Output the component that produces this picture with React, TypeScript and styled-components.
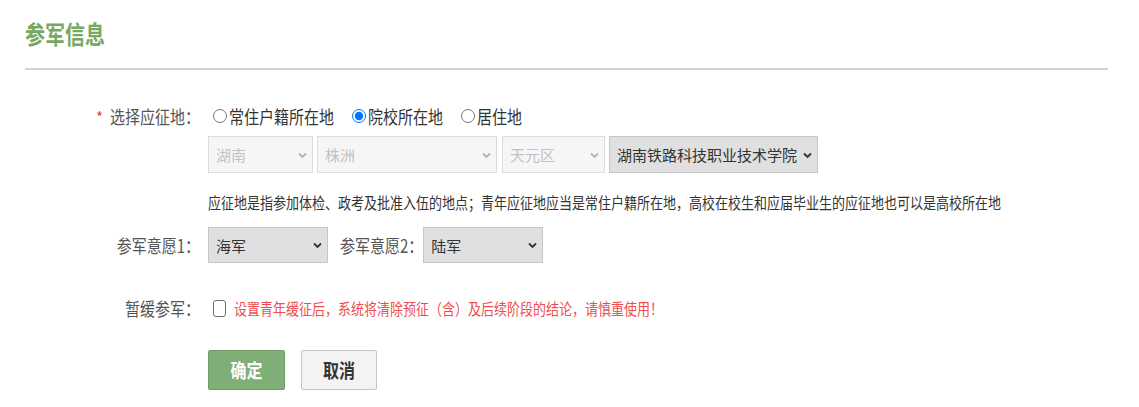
import React from "react";
import styled, { createGlobalStyle } from "styled-components";

const Global = createGlobalStyle`
  html, body { margin: 0; padding: 0; background: #fff; }
  body { font-family: "Noto Sans CJK SC", "Noto Sans", sans-serif; color: #333; }
  * { box-sizing: border-box; }
`;

const Page = styled.div`
  width: 1139px;
  height: 407px;
  overflow: hidden;
`;

const Header = styled.div`
  height: 68px;
  padding-left: 25px;
  display: flex;
  align-items: center;
`;

const Title = styled.h2`
  margin: 0;
  font-size: 20px;
  font-weight: 700;
  color: #76a862;
  line-height: 24px;
  transform: scaleY(1.25);
`;

const Divider = styled.div`
  margin: 0 31px 0 25px;
  border-top: 2px solid #d2d2d2;
`;

const Form = styled.div`
  display: flex;
  flex-direction: column;
`;

const Row = styled.div<{ $top: number; $h: number }>`
  display: flex;
  align-items: center;
  margin-top: ${(p) => p.$top}px;
  height: ${(p) => p.$h}px;
`;

const LabelCol = styled.div`
  width: 204px;
  flex: none;
  text-align: right;
  margin-right: 4px;
`;

const Label = styled.span<{ $mr?: number }>`
  font-size: 15px;
  color: #555;
  white-space: nowrap;
  display: inline-block;
  transform: scaleY(1.2);
  margin-right: ${(p) => p.$mr ?? 4}px;
`;

const Star = styled.span`
  color: #e8403a;
  margin-right: 7px;
  font-size: 15px;
`;

const Content = styled.div`
  display: flex;
  align-items: center;
`;

const RadioItem = styled.label`
  display: inline-flex;
  align-items: center;
  margin-right: 13px;
  font-size: 15px;
  color: #333;
  cursor: pointer;
`;

const Radio = styled.input`
  width: 14px;
  height: 14px;
  margin: 0 2px 0 5px;
`;

const Txt = styled.span`
  display: inline-block;
  transform: scaleY(1.2);
  white-space: nowrap;
`;

const SelectWrap = styled.div<{ $w: number; $mr?: number }>`
  position: relative;
  width: ${(p) => p.$w}px;
  margin-right: ${(p) => p.$mr ?? 0}px;
  flex: none;
`;

const Select = styled.select<{ $h: number }>`
  appearance: none;
  -webkit-appearance: none;
  width: 100%;
  height: ${(p) => p.$h}px;
  padding: 0 20px 0 7px;
  font-family: inherit;
  font-size: 15px;
  color: #333;
  background: #e0e0e0;
  border: 1px solid #c6c6c6;
  border-radius: 0;
  outline: none;
  &:disabled {
    background: #f6f6f6;
    border-color: #dcdcdc;
    color: #c2c2c2;
    opacity: 1;
  }
`;

const Chevron = styled.svg<{ $disabled?: boolean }>`
  position: absolute;
  right: 6px;
  top: 50%;
  width: 9px;
  height: 7px;
  margin-top: -3px;
  pointer-events: none;
  color: ${(p) => (p.$disabled ? "#b5b5b5" : "#333")};
`;

const Hint = styled.div`
  font-size: 13px;
  color: #333;
  white-space: nowrap;
  transform: scaleY(1.2);
  transform-origin: left center;
`;

const Checkbox = styled.input`
  appearance: none;
  -webkit-appearance: none;
  width: 13px;
  height: 17px;
  margin: 0 8px 0 5px;
  border: 1px solid #6f6f6f;
  border-radius: 3px;
  background: #fff;
  &:checked {
    background: #0075ff;
    border-color: #0075ff;
  }
`;

const Warn = styled.span`
  font-size: 13px;
  color: #ee4d4d;
  white-space: nowrap;
  display: inline-block;
  transform: scaleY(1.2);
`;

const Buttons = styled.div`
  display: flex;
  gap: 16px;
  margin-top: 30px;
  padding-left: 208px;
`;

const Button = styled.button<{ $primary?: boolean }>`
  width: ${(p) => (p.$primary ? 77 : 76)}px;
  height: 40px;
  font-family: inherit;
  font-size: 16px;
  font-weight: 700;
  border-radius: 2px;
  cursor: pointer;
  color: ${(p) => (p.$primary ? "#fff" : "#333")};
  background: ${(p) => (p.$primary ? "#7fae76" : "#f3f3f3")};
  border: 1px solid ${(p) => (p.$primary ? "#6e9d64" : "#c4c4c4")};
  span { display: inline-block; transform: scaleY(1.2); }
`;

const Arrow: React.FC<{ disabled?: boolean }> = ({ disabled }) => (
  <Chevron $disabled={disabled} viewBox="0 0 9 7">
    <path d="M1 1.5 L4.5 5 L8 1.5" fill="none" stroke="currentColor" strokeWidth="1.9" />
  </Chevron>
);

const Sel: React.FC<{ w: number; h: number; mr?: number; disabled?: boolean; value: string }> = ({ w, h, mr, disabled, value }) => (
  <SelectWrap $w={w} $mr={mr}>
    <Select $h={h} disabled={disabled} defaultValue={value}>
      <option value={value}>{value}</option>
    </Select>
    <Arrow disabled={disabled} />
  </SelectWrap>
);

export default function App() {
  return (
    <Page>
      <Global />
      <Header>
        <Title>参军信息</Title>
      </Header>
      <Divider />
      <Form>
        <Row $top={33} $h={26}>
          <LabelCol>
            <Star>*</Star>
            <Label>选择应征地：</Label>
          </LabelCol>
          <Content>
            <RadioItem>
              <Radio type="radio" name="loc" />
              <Txt>常住户籍所在地</Txt>
            </RadioItem>
            <RadioItem>
              <Radio type="radio" name="loc" defaultChecked />
              <Txt>院校所在地</Txt>
            </RadioItem>
            <RadioItem>
              <Radio type="radio" name="loc" />
              <Txt>居住地</Txt>
            </RadioItem>
          </Content>
        </Row>
        <Row $top={7} $h={37}>
          <LabelCol />
          <Content>
            <Sel w={105} h={37} mr={4} disabled value="湖南" />
            <Sel w={180} h={37} mr={5} disabled value="株洲" />
            <Sel w={103} h={37} mr={4} disabled value="天元区" />
            <Sel w={209} h={37} value="湖南铁路科技职业技术学院" />
          </Content>
        </Row>
        <Row $top={19} $h={20}>
          <LabelCol />
          <Hint>应征地是指参加体检、政考及批准入伍的地点；青年应征地应当是常住户籍所在地，高校在校生和应届毕业生的应征地也可以是高校所在地</Hint>
        </Row>
        <Row $top={15} $h={36}>
          <LabelCol>
            <Label>参军意愿1：</Label>
          </LabelCol>
          <Content>
            <Sel w={120} h={36} mr={12} value="海军" />
            <Label $mr={0}>参军意愿2：</Label>
            <Sel w={120} h={36} value="陆军" />
          </Content>
        </Row>
        <Row $top={33} $h={24}>
          <LabelCol>
            <Label>暂缓参军：</Label>
          </LabelCol>
          <Content>
            <Checkbox type="checkbox" />
            <Warn>设置青年缓征后，系统将清除预征（含）及后续阶段的结论，请慎重使用！</Warn>
          </Content>
        </Row>
        <Buttons>
          <Button $primary>
            <span>确定</span>
          </Button>
          <Button>
            <span>取消</span>
          </Button>
        </Buttons>
      </Form>
    </Page>
  );
}
